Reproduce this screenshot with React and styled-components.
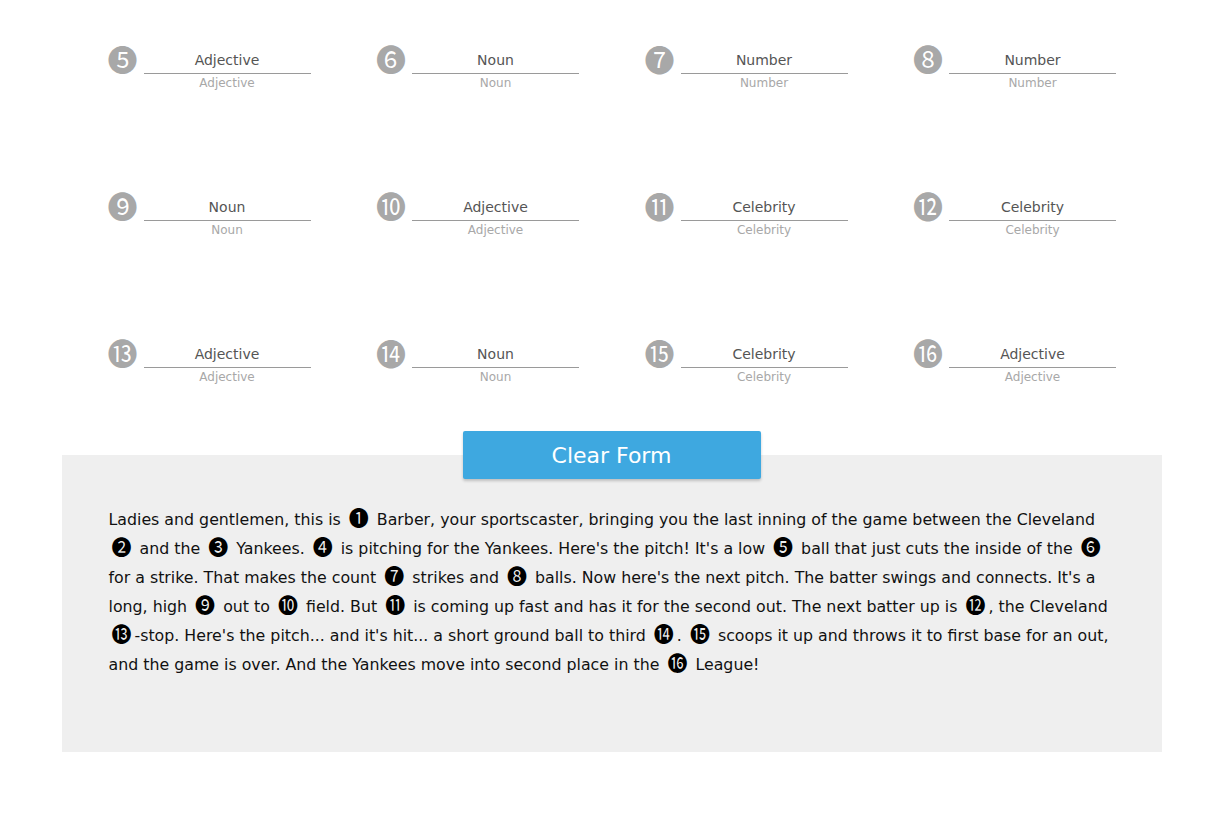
import React from "react";
import styled, { createGlobalStyle } from "styled-components";

const Global = createGlobalStyle`
  html, body { margin: 0; padding: 0; background: #fff; }
  body { font-family: "DejaVu Sans", "Open Sans", sans-serif; }
`;

const Page = styled.div`
  width: 1100px;
  margin: 0 auto;
  padding-top: 43px;
`;

const Grid = styled.div`
  display: grid;
  grid-template-columns: repeat(4, 268.5px);
  row-gap: 99px;
  padding-left: 48px;
`;

const Field = styled.div`
  display: flex;
  align-items: flex-start;
  gap: 8px;
`;

const Num = styled.span`
  font-family: "Noto Sans CJK JP", "DejaVu Sans", sans-serif;
  font-size: 30px;
  line-height: 30px;
  color: #a8a8a8;
  width: 26px;
  display: flex;
  justify-content: center;
`;

const InputWrap = styled.div`
  display: flex;
  flex-direction: column;
  align-items: center;
  width: 167px;
`;

const Input = styled.div`
  width: 100%;
  box-sizing: border-box;
  border-bottom: 1px solid #9a9a9a;
  text-align: center;
  font-size: 14px;
  line-height: 18px;
  padding-top: 8px;
  padding-bottom: 4px;
  color: #555;
`;

const Helper = styled.div`
  font-size: 12px;
  line-height: 16px;
  margin-top: 1px;
  color: #a8a8a8;
`;

const ButtonRow = styled.div`
  display: flex;
  justify-content: center;
  margin-top: 46px;
  margin-bottom: -24px;
  position: relative;
  z-index: 1;
`;

const Button = styled.button`
  width: 298px;
  height: 48px;
  border: none;
  border-radius: 2px;
  background: #3ea8e0;
  color: #fff;
  font-family: "DejaVu Sans", sans-serif;
  font-size: 22px;
  box-shadow: 0 2px 3px rgba(0, 0, 0, 0.2);
  cursor: pointer;
`;

const StoryBox = styled.div`
  background: #efefef;
  padding: 50px 47px 73px;
  font-size: 15.8px;
  line-height: 29px;
  color: #111;
  white-space: nowrap;
`;

const Badge = styled.span`
  font-family: "Noto Sans CJK JP", "DejaVu Sans", sans-serif;
  font-size: 20px;
  line-height: 0;
  color: #000;
  margin: 0 3px;
  vertical-align: -1px;
`;

const fields = [
  ["❺", "Adjective"], ["❻", "Noun"], ["❼", "Number"], ["❽", "Number"],
  ["❾", "Noun"], ["❿", "Adjective"], ["⓫", "Celebrity"], ["⓬", "Celebrity"],
  ["⓭", "Adjective"], ["⓮", "Noun"], ["⓯", "Celebrity"], ["⓰", "Adjective"],
];

const story = [
  "Ladies and gentlemen, this is ", "❶", " Barber, your sportscaster, bringing you the last inning of the game between the Cleveland", "BR",
  " ", "❷", " and the ", "❸", " Yankees. ", "❹", " is pitching for the Yankees. Here's the pitch! It's a low ", "❺",
  " ball that just cuts the inside of the ", "❻", "BR", "for a strike. That makes the count ", "❼", " strikes and ", "❽",
  " balls. Now here's the next pitch. The batter swings and connects. It's a", "BR", "long, high ", "❾", " out to ", "❿",
  " field. But ", "⓫", " is coming up fast and has it for the second out. The next batter up is ", "⓬",
  ", the Cleveland", "BR", "⓭", "-stop. Here's the pitch... and it's hit... a short ground ball to third ", "⓮", ". ", "⓯",
  " scoops it up and throws it to first base for an out,", "BR", "and the game is over. And the Yankees move into second place in the ",
  "⓰", " League!",
];

const isBadge = (s) => s.length === 1 && s.charCodeAt(0) > 0x2000;

export default function App() {
  return (
    <>
      <Global />
      <Page>
        <Grid>
          {fields.map(([n, label], i) => (
            <Field key={i}>
              <Num>{n}</Num>
              <InputWrap>
                <Input>{label}</Input>
                <Helper>{label}</Helper>
              </InputWrap>
            </Field>
          ))}
        </Grid>
        <ButtonRow>
          <Button>Clear Form</Button>
        </ButtonRow>
        <StoryBox>
          {story.map((s, i) =>
            s === "BR" ? (
              <br key={i} />
            ) : isBadge(s) ? (
              <Badge key={i}>{s}</Badge>
            ) : (
              <React.Fragment key={i}>{s}</React.Fragment>
            )
          )}
        </StoryBox>
      </Page>
    </>
  );
}
